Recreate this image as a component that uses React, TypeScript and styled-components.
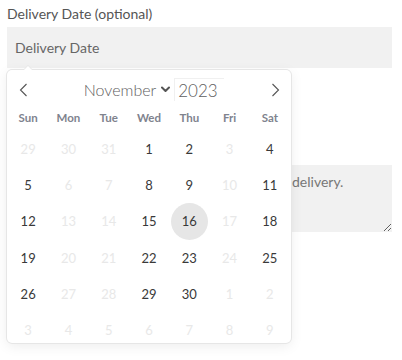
import React from "react";
import styled, { createGlobalStyle } from "styled-components";

const Global = createGlobalStyle`
  html, body { margin: 0; padding: 0; background: #fff; }
  body { font-family: Lato, "Open Sans", sans-serif; }
  * { box-sizing: border-box; }
`;

const Page = styled.div`
  width: 402px;
  height: 360px;
  padding: 4px 10px 0 7px;
  display: flex;
  flex-direction: column;
  position: relative;
  overflow: hidden;
`;

const Label = styled.label`
  font-size: 14px;
  color: #555;
  line-height: 20px;
  margin-bottom: 3px;
`;

const Field = styled.div`
  position: relative;
`;

const DateInput = styled.div`
  height: 41px;
  background: #f1f1f1;
  padding: 0 8px;
  display: flex;
  align-items: center;
  font-size: 14px;
  color: #666;
`;

const Calendar = styled.div`
  position: absolute;
  left: 0;
  top: 43px;
  width: 284px;
  height: 273px;
  background: #fff;
  border-radius: 5px;
  box-shadow: 1px 0 0 #e6e6e6, -1px 0 0 #e6e6e6, 0 1px 0 #e6e6e6, 0 -1px 0 #e6e6e6,
    0 3px 13px rgba(0, 0, 0, 0.08);
  z-index: 5;
  &::before {
    content: "";
    position: absolute;
    left: 16px;
    top: -5px;
    border: 5px solid transparent;
    border-top: 0;
    border-bottom-color: #e6e6e6;
  }
  &::after {
    content: "";
    position: absolute;
    left: 17px;
    top: -4px;
    border: 4px solid transparent;
    border-top: 0;
    border-bottom-color: #fff;
  }
`;

const Clip = styled.div`
  width: 100%;
  height: 100%;
  overflow: hidden;
  border-radius: 5px;
  display: flex;
  flex-direction: column;
`;

const MonthBar = styled.div`
  height: 37px;
  display: flex;
  align-items: center;
  justify-content: space-between;
  padding: 2px 10px 0 10px;
  flex-shrink: 0;
`;

const NavBtn = styled.span`
  width: 12px;
  display: flex;
  justify-content: center;
  color: #555;
`;

const MonthTitle = styled.div`
  display: flex;
  align-items: center;
  gap: 4px;
  color: #5e5e5e;
  font-weight: 300;
  font-size: 16px;
  margin-left: 10px;
`;

const MonthName = styled.span`
  display: flex;
  align-items: center;
  gap: 5px;
`;

const YearBox = styled.span`
  width: 50px;
  height: 23px;
  border-top: 1px solid #f0f0f0;
  border-left: 1px solid #f0f0f0;
  display: flex;
  align-items: center;
  padding-left: 3px;
  font-size: 17px;
`;

const Weekdays = styled.div`
  display: grid;
  grid-template-columns: repeat(7, 1fr);
  height: 20px;
  align-items: center;
  padding: 0 1px;
  flex-shrink: 0;
`;

const Weekday = styled.span`
  text-align: center;
  font-size: 11.5px;
  font-weight: 700;
  color: #80838e;
`;

const Days = styled.div`
  margin-top: 4px;
  display: grid;
  grid-template-columns: repeat(7, 1fr);
  grid-auto-rows: 36.2px;
  padding: 0 1px;
`;

const Day = styled.span<{ $muted?: boolean; $selected?: boolean }>`
  display: flex;
  align-items: center;
  justify-content: center;
  font-size: 13px;
  color: ${(p) => (p.$muted ? "#e8e8e8" : "#393939")};
  position: relative;
  z-index: 0;
  &::before {
    content: "";
    display: ${(p) => (p.$selected ? "block" : "none")};
    position: absolute;
    width: 37px;
    height: 37px;
    border-radius: 50%;
    background: #e6e6e6;
    z-index: -1;
  }
`;

const NotesArea = styled.textarea`
  margin-top: 97px;
  height: 67px;
  width: 100%;
  background: #f1f1f1;
  border: none;
  padding: 8px 8px;
  font-family: Lato, "Open Sans", sans-serif;
  font-size: 14px;
  word-spacing: 1.4px;
  color: #777;
  resize: vertical;
  outline: none;
`;

const Chevron = () => (
  <svg width="9" height="7" viewBox="0 0 9 7">
    <path d="M1 1.5 L4.5 5 L8 1.5" fill="none" stroke="#555" strokeWidth="2" strokeLinecap="round" strokeLinejoin="round" />
  </svg>
);

const Prev = () => (
  <svg width="9" height="14" viewBox="0 0 9 14">
    <polyline points="7.5,1 1.5,7 7.5,13" fill="none" stroke="#555" strokeWidth="1.1" />
  </svg>
);

const Next = () => (
  <svg width="9" height="14" viewBox="0 0 9 14">
    <polyline points="1.5,1 7.5,7 1.5,13" fill="none" stroke="#555" strokeWidth="1.1" />
  </svg>
);

const weekdays = ["Sun", "Mon", "Tue", "Wed", "Thu", "Fri", "Sat"];

type Cell = { n: number; muted: boolean; selected?: boolean };

const buildDays = (): Cell[] => {
  const cells: Cell[] = [];
  [29, 30, 31].forEach((n) => cells.push({ n, muted: true }));
  for (let d = 1; d <= 30; d++) {
    const dow = (d + 2) % 7; // Nov 1 2023 = Wed (3)
    const enabled = dow === 0 || dow === 3 || dow === 4 || dow === 6;
    cells.push({ n: d, muted: !enabled, selected: d === 16 });
  }
  for (let d = 1; d <= 9; d++) cells.push({ n: d, muted: true });
  return cells;
};

export default function App() {
  const days = buildDays();
  return (
    <>
      <Global />
      <Page>
        <Label>Delivery Date (optional)</Label>
        <Field>
          <DateInput>Delivery Date</DateInput>
          <Calendar>
            <Clip>
              <MonthBar>
                <NavBtn><Prev /></NavBtn>
                <MonthTitle>
                  <MonthName>November <Chevron /></MonthName>
                  <YearBox>2023</YearBox>
                </MonthTitle>
                <NavBtn><Next /></NavBtn>
              </MonthBar>
              <Weekdays>
                {weekdays.map((w) => (
                  <Weekday key={w}>{w}</Weekday>
                ))}
              </Weekdays>
              <Days>
                {days.map((c, i) => (
                  <Day key={i} $muted={c.muted} $selected={c.selected}>
                    {c.n}
                  </Day>
                ))}
              </Days>
            </Clip>
          </Calendar>
        </Field>
        <NotesArea
          readOnly
          defaultValue="Please add any special instructions for your delivery."
        />
      </Page>
    </>
  );
}
